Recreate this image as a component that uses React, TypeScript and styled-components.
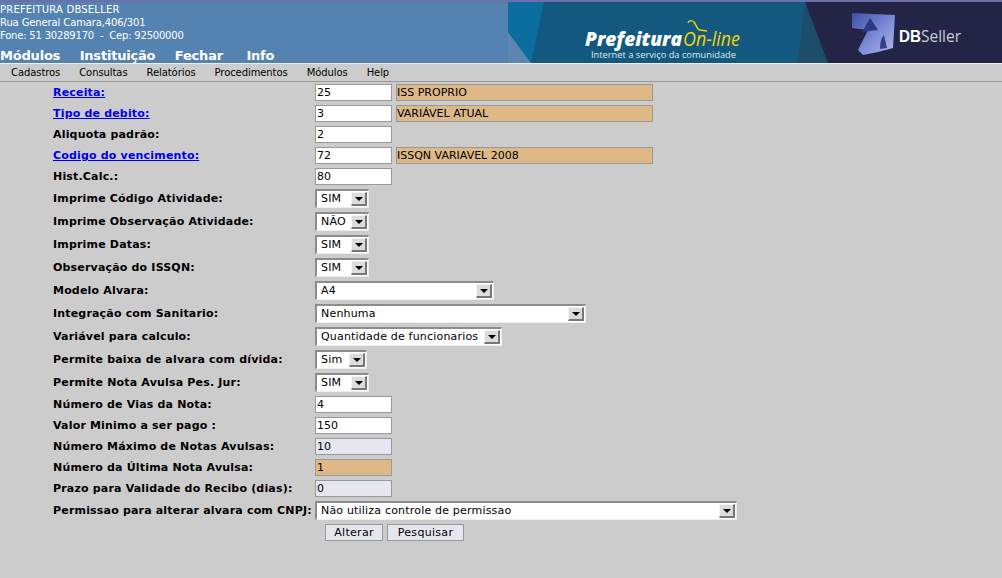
import React from "react";
import styled, { createGlobalStyle } from "styled-components";

const GlobalStyle = createGlobalStyle`
  html, body {
    margin: 0;
    padding: 0;
    background: #cccccc;
    font-family: "DejaVu Sans", Verdana, sans-serif;
    font-size: 11px;
    color: #000;
  }
`;

const Page = styled.div`
  width: 1002px;
  height: 578px;
  overflow: hidden;
  background: #cccccc;
`;

const Header = styled.header`
  height: 61px;
  border-top: 2px solid #6d6fa8;
  background: #5583b1;
  display: flex;
  justify-content: space-between;
`;

const HeaderLeft = styled.div`
  display: flex;
  flex-direction: column;
  color: #fff;
`;

const InfoLine = styled.div<{ $ls: number }>`
  font-size: 10px;
  height: 13px;
  line-height: 13px;
  letter-spacing: ${(p) => p.$ls}px;
  white-space: pre;
`;

const Info = styled.div`
  padding-top: 1px;
`;

const TopMenu = styled.nav`
  display: flex;
  gap: 19.5px;
  margin-top: 6px;
  font-size: 13px;
  font-weight: bold;
  line-height: 16px;
  letter-spacing: -0.2px;

  & > span:last-child {
    margin-left: 4px;
  }
`;

const Banner = styled.svg`
  display: block;
  width: 494px;
  height: 61px;
`;

const SubMenu = styled.nav`
  height: 17px;
  border-top: 1px solid #f0f0f0;
  border-bottom: 1px solid #999;
  display: flex;
  gap: 19px;
  padding-left: 11px;
  align-items: center;
  font-size: 10px;
  letter-spacing: -0.08px;
  background: #cccccc;
`;

const Form = styled.div`
  display: flex;
  flex-direction: column;
  padding-left: 53px;
`;

const Row = styled.div<{ $h: number }>`
  display: grid;
  grid-template-columns: 262px auto;
  align-items: center;
  height: ${(p) => p.$h}px;
`;

const Label = styled.span`
  font-weight: bold;
  letter-spacing: 0.18px;
  white-space: nowrap;
`;

const LinkLabel = styled(Label)`
  color: #0000ee;
  text-decoration: underline;
`;

const Controls = styled.div`
  display: flex;
  gap: 4px;
  align-items: center;
`;

const Input = styled.div<{ $bg?: string }>`
  box-sizing: border-box;
  width: 77px;
  height: 17px;
  line-height: 15px;
  padding-left: 1px;
  border: 1px solid #999;
  background: ${(p) => p.$bg ?? "#ffffff"};
  white-space: pre;
  overflow: hidden;
`;

const Description = styled(Input)`
  width: 257px;
  padding-left: 0;
  background: #deb887;
`;

const Select = styled.div<{ $w: number }>`
  box-sizing: border-box;
  width: ${(p) => p.$w}px;
  height: 19px;
  border-style: solid;
  border-width: 2px 1px 1px 2px;
  border-color: #8c8c8c #eeeeee #eeeeee #8c8c8c;
  background: #fff;
  display: flex;
  align-items: center;
  justify-content: space-between;
  padding: 0 1px 0 4px;
  letter-spacing: 0.19px;
  white-space: pre;
`;

const SelectValue = styled.span`
  margin-bottom: 2px;
`;

const Arrow = styled.span`
  box-sizing: border-box;
  width: 16px;
  height: 14px;
  background: #dcdcdc;
  border-style: solid;
  border-width: 1px 2px 2px 1px;
  border-color: #f4f4f4 #777 #777 #f4f4f4;
  display: flex;
  align-items: center;
  justify-content: center;

  &::after {
    content: "";
    border-style: solid;
    border-width: 4px 4px 0 4px;
    border-color: #000 transparent transparent transparent;
  }
`;

const Buttons = styled.div`
  display: flex;
  gap: 4px;
  padding-left: 10px;
`;

const Button = styled.div<{ $w: number }>`
  box-sizing: border-box;
  width: ${(p) => p.$w}px;
  height: 17px;
  line-height: 15px;
  text-align: center;
  letter-spacing: 0.3px;
  border: 1px solid #999;
  background: #e6e6ee;
`;

type Field =
  | { kind: "input"; label: string; link?: boolean; value: string; desc?: string; bg?: string }
  | { kind: "select"; label: string; value: string; w: number };

const READ_BG = "#e6e6f0";

const fields: Field[] = [
  { kind: "input", label: "Receita:", link: true, value: "25", desc: "ISS PROPRIO" },
  { kind: "input", label: "Tipo de debito:", link: true, value: "3", desc: "VARIÁVEL ATUAL" },
  { kind: "input", label: "Aliquota padrão:", value: "2" },
  { kind: "input", label: "Codigo do vencimento:", link: true, value: "72", desc: "ISSQN VARIAVEL 2008" },
  { kind: "input", label: "Hist.Calc.:", value: "80" },
  { kind: "select", label: "Imprime Código Atividade:", value: "SIM", w: 54 },
  { kind: "select", label: "Imprime Observação Atividade:", value: "NÃO", w: 54 },
  { kind: "select", label: "Imprime Datas:", value: "SIM", w: 54 },
  { kind: "select", label: "Observação do ISSQN:", value: "SIM", w: 54 },
  { kind: "select", label: "Modelo Alvara:", value: "A4", w: 179 },
  { kind: "select", label: "Integração com Sanitario:", value: "Nenhuma", w: 271 },
  { kind: "select", label: "Variável para calculo:", value: "Quantidade de funcionarios", w: 187 },
  { kind: "select", label: "Permite baixa de alvara com dívida:", value: "Sim", w: 52 },
  { kind: "select", label: "Permite Nota Avulsa Pes. Jur:", value: "SIM", w: 54 },
  { kind: "input", label: "Número de Vias da Nota:", value: "4" },
  { kind: "input", label: "Valor Minimo a ser pago :", value: "150" },
  { kind: "input", label: "Número Máximo de Notas Avulsas:", value: "10", bg: READ_BG },
  { kind: "input", label: "Número da Última Nota Avulsa:", value: "1", bg: "#deb887" },
  { kind: "input", label: "Prazo para Validade do Recibo (dias):", value: "0", bg: READ_BG },
  { kind: "select", label: "Permissao para alterar alvara com CNPJ:", value: "Não utiliza controle de permissao", w: 422 },
];

const topMenu = ["Módulos", "Instituição", "Fechar", "Info"];
const subMenu = ["Cadastros", "Consultas", "Relatórios", "Procedimentos", "Módulos", "Help"];

export default function App() {
  return (
    <Page>
      <GlobalStyle />
      <Header>
        <HeaderLeft>
          <Info>
            <InfoLine $ls={0.2}>PREFEITURA DBSELLER</InfoLine>
            <InfoLine $ls={-0.12}>Rua General Camara,406/301</InfoLine>
            <InfoLine $ls={-0.2}>{"Fone: 51 30289170  -  Cep: 92500000"}</InfoLine>
          </Info>
          <TopMenu>
            {topMenu.map((m) => (
              <span key={m}>{m}</span>
            ))}
          </TopMenu>
        </HeaderLeft>
        <Banner viewBox="0 0 494 61">
          <defs>
            <linearGradient id="dbLogo" x1="0" y1="0" x2="1" y2="1">
              <stop offset="0" stopColor="#3f4fa8" />
              <stop offset="0.55" stopColor="#7c8cd8" />
              <stop offset="1" stopColor="#b4bdea" />
            </linearGradient>
          </defs>
          <rect width="494" height="61" fill="#13597f" />
          <polygon points="0,0 36,0 23,61 0,30" fill="#0a6d9e" />
          <polygon points="0,30 23,61 0,61" fill="#5b87b0" />
          <polygon points="297,0 290,61 320,61" fill="#1c4d69" />
          <polygon points="297,0 494,0 494,61 320,61" fill="#242546" />
          <text x="77" y="44" fontFamily="'Open Sans', sans-serif" fontWeight="800" fontStyle="italic" fontSize="20" fill="#ffffff" textLength="97" lengthAdjust="spacingAndGlyphs">Prefeitura</text>
          <text x="175" y="44" fontFamily="'Open Sans', sans-serif" fontStyle="italic" fontSize="20" fill="#f2d20a" textLength="57" lengthAdjust="spacingAndGlyphs">On-line</text>
          <path d="M180 21 c1 -3 4 -3 6 -1 c2 2 3 8 6 8 l7 1" fill="none" stroke="#f2d20a" strokeWidth="1.4" />
          <text x="83" y="56" fontFamily="'Open Sans', sans-serif" fontSize="9.5" fill="#dfe9ee" textLength="145" lengthAdjust="spacingAndGlyphs">Internet a serviço da comunidade</text>
          <path d="M344 11 L387 13 L385 46 L370 50 L355 53 L350 48 L360 28 L344 26 Z" fill="url(#dbLogo)" />
          <path d="M354 30 L362 16 L370 28 Z" fill="#2f3a86" />
          <path d="M372 47 c0 -8 2 -12 4 -14 l3 13 Z" fill="#39407f" />
          <text x="391" y="40" fontFamily="'Liberation Sans', sans-serif" fontWeight="700" fontSize="16" fill="#ffffff" textLength="22" lengthAdjust="spacingAndGlyphs">DB</text>
          <text x="413" y="40" fontFamily="'Open Sans', sans-serif" fontSize="16" fill="#c9cbd8" textLength="40" lengthAdjust="spacingAndGlyphs">Seller</text>
        </Banner>
      </Header>
      <SubMenu>
        {subMenu.map((m) => (
          <span key={m}>{m}</span>
        ))}
      </SubMenu>
      <Form>
        {fields.map((f) =>
          f.kind === "input" ? (
            <Row $h={21} key={f.label}>
              {f.link ? <LinkLabel>{f.label}</LinkLabel> : <Label>{f.label}</Label>}
              <Controls>
                <Input $bg={f.bg}>{f.value}</Input>
                {f.desc && <Description>{f.desc}</Description>}
              </Controls>
            </Row>
          ) : (
            <Row $h={23} key={f.label}>
              <Label>{f.label}</Label>
              <Select $w={f.w}>
                <SelectValue>{f.value}</SelectValue>
                <Arrow />
              </Select>
            </Row>
          )
        )}
        <Row $h={21}>
          <span />
          <Buttons>
            <Button $w={58}>Alterar</Button>
            <Button $w={77}>Pesquisar</Button>
          </Buttons>
        </Row>
      </Form>
    </Page>
  );
}
